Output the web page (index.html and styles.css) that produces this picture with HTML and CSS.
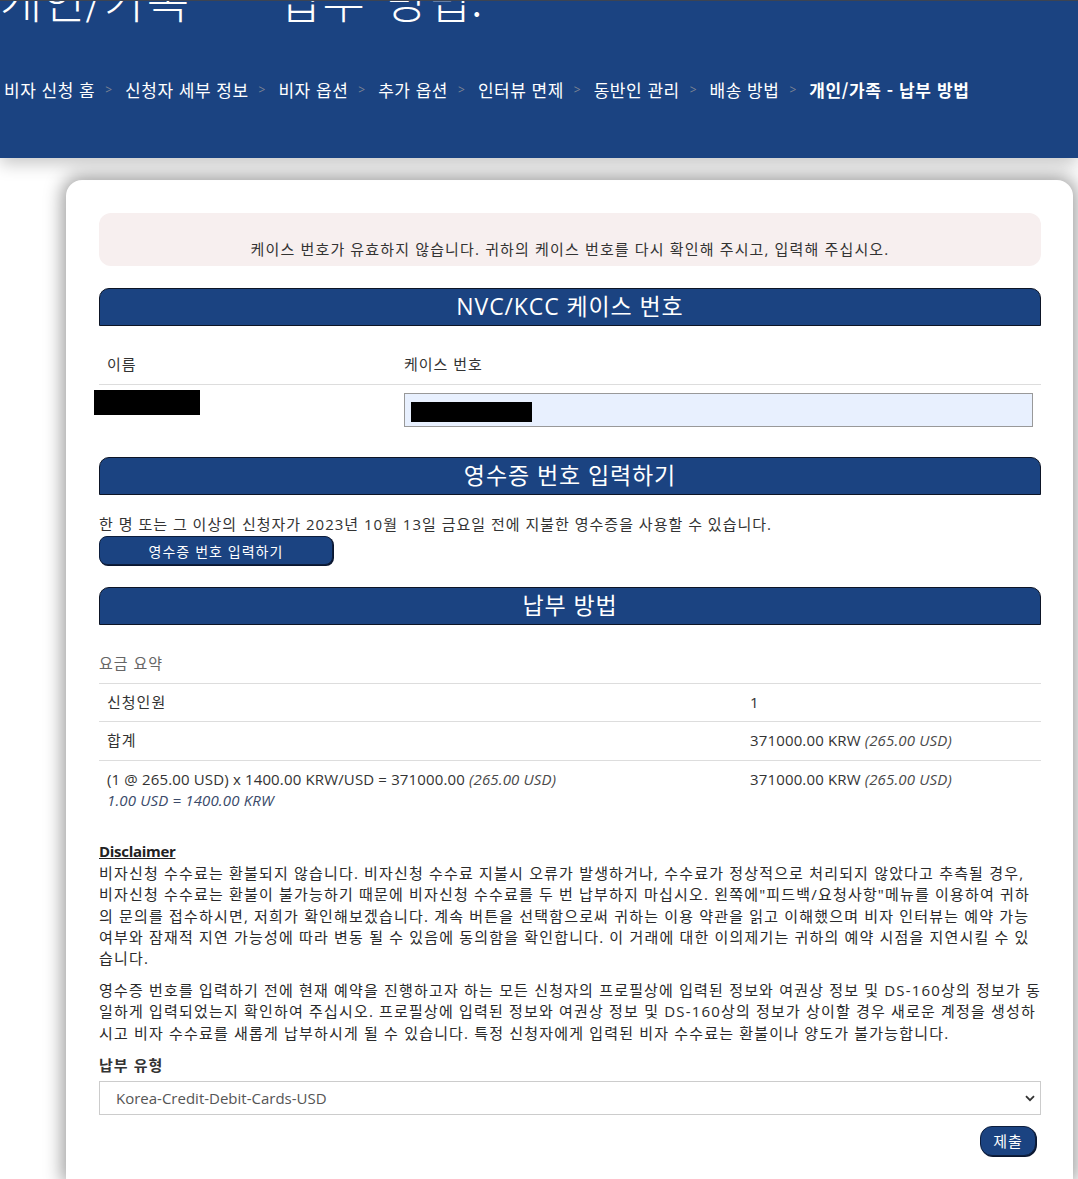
FILE: index.html
```html
<!DOCTYPE html>
<html lang="ko">
<head>
<meta charset="utf-8">
<title>개인/가족 - 납부 방법</title>
<link rel="stylesheet" href="styles.css">
</head>
<body>
<header class="top">
  <h1 class="page-title">개인/가족 <span class="dash">-</span> 납부 방법.</h1>
  <nav class="crumbs">
    <span class="crumb">비자 신청 홈</span><span class="sep">&gt;</span>
    <span class="crumb">신청자 세부 정보</span><span class="sep">&gt;</span>
    <span class="crumb">비자 옵션</span><span class="sep">&gt;</span>
    <span class="crumb">추가 옵션</span><span class="sep">&gt;</span>
    <span class="crumb">인터뷰 면제</span><span class="sep">&gt;</span>
    <span class="crumb">동반인 관리</span><span class="sep">&gt;</span>
    <span class="crumb">배송 방법</span><span class="sep">&gt;</span>
    <span class="crumb current">개인/가족 - 납부 방법</span>
  </nav>
</header>

<main class="card">
  <div class="alert">케이스 번호가 유효하지 않습니다. 귀하의 케이스 번호를 다시 확인해 주시고, 입력해 주십시오.</div>

  <h2 class="section-head">NVC/KCC 케이스 번호</h2>
  <table class="case-table">
    <thead>
      <tr><th class="c-name">이름</th><th>케이스 번호</th></tr>
    </thead>
    <tbody>
      <tr>
        <td class="c-name"><span class="redact name-redact"></span></td>
        <td><div class="case-input"><span class="redact input-redact"></span></div></td>
      </tr>
    </tbody>
  </table>

  <h2 class="section-head">영수증 번호 입력하기</h2>
  <p class="receipt-note">한 명 또는 그 이상의 신청자가 2023년 10월 13일 금요일 전에 지불한 영수증을 사용할 수 있습니다.</p>
  <button class="btn btn-receipt" type="button">영수증 번호 입력하기</button>

  <h2 class="section-head">납부 방법</h2>
  <table class="fee-table">
    <caption>요금 요약</caption>
    <tbody>
      <tr><td class="c-label"><span class="ko">신청인원</span></td><td>1</td></tr>
      <tr><td class="c-label"><span class="ko">합계</span></td><td>371000.00 KRW <em>(265.00 USD)</em></td></tr>
      <tr>
        <td class="c-label">(1 @ 265.00 USD) x 1400.00 KRW/USD = 371000.00 <em>(265.00 USD)</em><br><em class="rate">1.00 USD = 1400.00 KRW</em></td>
        <td>371000.00 KRW <em>(265.00 USD)</em></td>
      </tr>
    </tbody>
  </table>

  <p class="disclaimer"><u class="disc-title">Disclaimer</u><br>비자신청 수수료는 환불되지 않습니다. 비자신청 수수료 지불시 오류가 발생하거나, 수수료가 정상적으로 처리되지 않았다고 추측될 경우,<br>비자신청 수수료는 환불이 불가능하기 때문에 비자신청 수수료를 두 번 납부하지 마십시오. 왼쪽에"피드백/요청사항"메뉴를 이용하여 귀하<br>의 문의를 접수하시면, 저희가 확인해보겠습니다. 계속 버튼을 선택함으로써 귀하는 이용 약관을 읽고 이해했으며 비자 인터뷰는 예약 가능<br>여부와 잠재적 지연 가능성에 따라 변동 될 수 있음에 동의함을 확인합니다. 이 거래에 대한 이의제기는 귀하의 예약 시점을 지연시킬 수 있<br>습니다.</p>
  <p class="disclaimer">영수증 번호를 입력하기 전에 현재 예약을 진행하고자 하는 모든 신청자의 프로필상에 입력된 정보와 여권상 정보 및 DS-160상의 정보가 동<br>일하게 입력되었는지 확인하여 주십시오. 프로필상에 입력된 정보와 여권상 정보 및 DS-160상의 정보가 상이할 경우 새로운 계정을 생성하<br>시고 비자 수수료를 새롭게 납부하시게 될 수 있습니다. 특정 신청자에게 입력된 비자 수수료는 환불이나 양도가 불가능합니다.</p>

  <label class="pay-label" for="paytype">납부 유형</label>
  <div class="select-wrap">
    <select id="paytype" class="pay-select">
      <option>Korea-Credit-Debit-Cards-USD</option>
    </select>
    <svg class="chev" width="10" height="7" viewBox="0 0 10 7"><path d="M1 1.2 L5 5.2 L9 1.2" fill="none" stroke="#333" stroke-width="1.8"/></svg>
  </div>
  <div class="actions">
    <button class="btn btn-submit" type="button">제출</button>
  </div>
</main>
</body>
</html>
```

FILE: styles.css
```css
html, body {
  margin: 0;
  padding: 0;
}
body {
  background: #ffffff;
  font-family: "Open Sans", "Noto Sans CJK KR", sans-serif;
  font-size: 15px;
  line-height: 1.42857;
  color: #333333;
  letter-spacing: 1px;
  overflow: hidden;
  height: 1179px;
}

.top {
  background: #1b4381;
  border-top: 1px solid #3d4452;
  height: 157px;
  overflow: hidden;
  box-shadow: 0 6px 16px rgba(0, 0, 0, 0.22);
  position: relative;
  z-index: 2;
}
.page-title {
  margin: -28px 0 0 0;
  padding: 0;
  font-size: 46px;
  font-weight: 300;
  line-height: 1.1;
  color: #ffffff;
  white-space: nowrap;
  word-spacing: 7px;
  letter-spacing: 0.4px;
  font-family: "Noto Sans CJK KR", sans-serif;
}
.dash {
  display: inline-block;
  margin: 0 17px;
  transform: translateY(-18px);
}
.crumbs {
  margin-top: 54px;
  padding-left: 4px;
  display: flex;
  align-items: center;
  white-space: nowrap;
  font-family: "Noto Sans CJK KR", sans-serif;
  font-size: 17px;
  line-height: 24px;
  color: #ffffff;
  letter-spacing: 0.5px;
}
.crumb.current {
  font-weight: 700;
  letter-spacing: 0.6px;
}
.sep {
  color: #7f8594;
  font-size: 12px;
  padding: 0 13px 0 10px;
  letter-spacing: 0;
  font-family: "Open Sans", sans-serif;
}

.card {
  display: block;
  box-sizing: border-box;
  margin: 22px 5px 0 66px;
  min-height: 999px;
  background: #ffffff;
  border-radius: 16px 16px 0 0;
  box-shadow: 0 0 18px 4px rgba(0, 0, 0, 0.38);
  padding: 33px 32px 20px 33px;
  position: relative;
  z-index: 1;
}

.alert {
  background: #f7efef;
  border-radius: 12px;
  padding: 26px 15px 6px;
  text-align: center;
  margin-bottom: 22px;
  letter-spacing: 1.15px;
}

.section-head {
  margin: 0;
  height: 36px;
  background: #1b4381;
  border: 1px solid #0d1526;
  border-radius: 10px 10px 0 0;
  color: #ffffff;
  text-align: center;
  font-size: 23px;
  font-weight: 400;
  line-height: 34px;
  letter-spacing: 0.9px;
}

table {
  width: 100%;
  border-collapse: collapse;
  border-spacing: 0;
}
td, th {
  padding: 8px;
  text-align: left;
  vertical-align: top;
  font-weight: 400;
}

.case-table {
  margin-top: 20px;
  margin-bottom: 22px;
}
.case-table th {
  border-bottom: 1px solid #dddddd;
}
.case-table .c-name {
  width: 281px;
}
.redact {
  display: block;
  background: #000000;
}
.name-redact {
  width: 106px;
  height: 25px;
  margin: -3px 0 0 -13px;
}
.case-input {
  background: #e8f0fe;
  border: 1px solid #999999;
  padding: 8px 0 0 6px;
  box-sizing: border-box;
  height: 34px;
}
.input-redact {
  width: 121px;
  height: 20px;
}

.receipt-note {
  margin: 19px 0 1px;
}
.btn {
  font-family: "Noto Sans CJK KR", sans-serif;
  background: #1b4381;
  color: #ffffff;
  border: 1px solid #0d1e3d;
  box-shadow: 1px 1px 0 #0a1630;
  cursor: pointer;
  padding: 0;
  letter-spacing: 1px;
}
.btn-receipt {
  display: block;
  width: 234px;
  height: 29px;
  border-radius: 8px;
  font-size: 14px;
  line-height: 26px;
  margin-bottom: 22px;
}

.fee-table {
  margin-top: 20px;
  margin-bottom: 22px;
}
.fee-table caption {
  caption-side: top;
  text-align: left;
  color: #666666;
  padding: 8px 0;
}
.fee-table td {
  border-top: 1px solid #dddddd;
  letter-spacing: 0.15px;
}
.fee-table .ko {
  letter-spacing: 1px;
}
.fee-table .c-label {
  width: 627px;
}
.fee-table em {
  font-style: italic;
  color: #4a4a4a;
}
.fee-table em.rate {
  color: #3a4a6a;
}

.disclaimer {
  margin: 0 0 10px;
  letter-spacing: 1.18px;
  white-space: nowrap;
  color: #2a2a2a;
}
.disc-title {
  font-weight: 700;
  color: #222;
  letter-spacing: -0.3px;
}

.pay-label {
  display: block;
  font-weight: 700;
  margin-bottom: 5px;
  font-family: "Noto Sans CJK KR", sans-serif;
}
.select-wrap {
  position: relative;
}
.pay-select {
  display: block;
  width: 100%;
  height: 34px;
  border: 1px solid #cccccc;
  border-radius: 0;
  background: #ffffff;
  -webkit-appearance: none;
  appearance: none;
  padding: 0 16px;
  font-family: "Open Sans", "Noto Sans CJK KR", sans-serif;
  font-size: 15px;
  letter-spacing: 0;
  color: #555555;
}
.chev {
  position: absolute;
  right: 6px;
  top: 14px;
}
.actions {
  display: flex;
  justify-content: flex-end;
  padding-right: 5px;
  margin-top: 11px;
}
.btn-submit {
  width: 56px;
  height: 30px;
  border-radius: 12px;
  font-size: 15px;
  line-height: 27px;
}
```
